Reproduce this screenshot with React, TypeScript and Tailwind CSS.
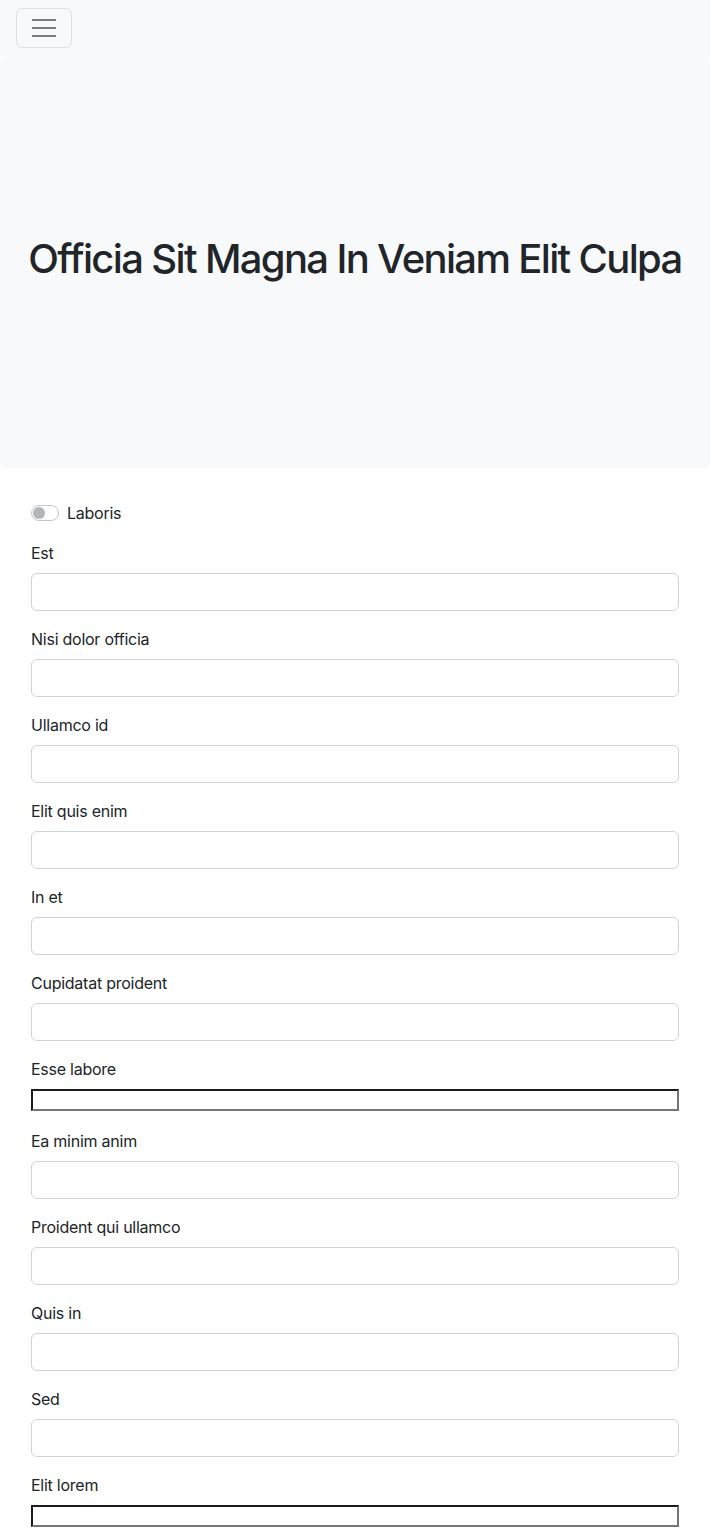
import React from "react";

const fields = [
  { label: "Est" },
  { label: "Nisi dolor officia" },
  { label: "Ullamco id" },
  { label: "Elit quis enim" },
  { label: "In et" },
  { label: "Cupidatat proident" },
  { label: "Esse labore", plain: true },
  { label: "Ea minim anim" },
  { label: "Proident qui ullamco" },
  { label: "Quis in" },
  { label: "Sed" },
  { label: "Elit lorem", plain: true },
];

export default function App() {
  return (
    <div className="min-h-[1528px] bg-white text-[#212529] font-['Inter','Liberation_Sans',sans-serif] text-base tracking-[-0.25px]">
      <nav className="bg-[#f8f9fa] h-14 px-4 py-2 flex items-start">
        <button className="w-14 h-10 border border-black/10 rounded-md flex flex-col items-center justify-center gap-[6px]">
          <span className="block w-6 h-[2px] bg-[#7a7b7c]" />
          <span className="block w-6 h-[2px] bg-[#7a7b7c]" />
          <span className="block w-6 h-[2px] bg-[#7a7b7c]" />
        </button>
      </nav>
      <header className="bg-[#f8f9fa] rounded-md h-[412px] flex items-center justify-center">
        <h1 className="text-[40px] font-medium leading-[1.2] tracking-[-1.65px] text-[#212529] pb-[6px]">
          Officia Sit Magna In Veniam Elit Culpa
        </h1>
      </header>
      <form className="px-[31px] pt-[33px]">
        <div className="flex items-center h-6 mb-4">
          <span className="relative w-[28px] h-[16px] rounded-full border border-[#c5c8cb] bg-white">
            <span className="absolute left-[1px] top-[1px] w-[12px] h-[12px] rounded-full bg-[#b1b6bc]" />
          </span>
          <span className="ml-2 leading-6">Laboris</span>
        </div>
        {fields.map((f) => (
          <div key={f.label} className="mb-4">
            <label className="block leading-6 mb-2">{f.label}</label>
            {f.plain ? (
              <div className="h-6">
                <input
                  type="text"
                  className="block w-full h-[22px] border-2 border-t-[#1b1b1b] border-l-[#1b1b1b] border-b-[#767676] border-r-[#767676] bg-white outline-none"
                />
              </div>
            ) : (
              <input
                type="text"
                className="block w-full h-[38px] border border-[#ced4da] rounded-md bg-white outline-none"
              />
            )}
          </div>
        ))}
      </form>
    </div>
  );
}
